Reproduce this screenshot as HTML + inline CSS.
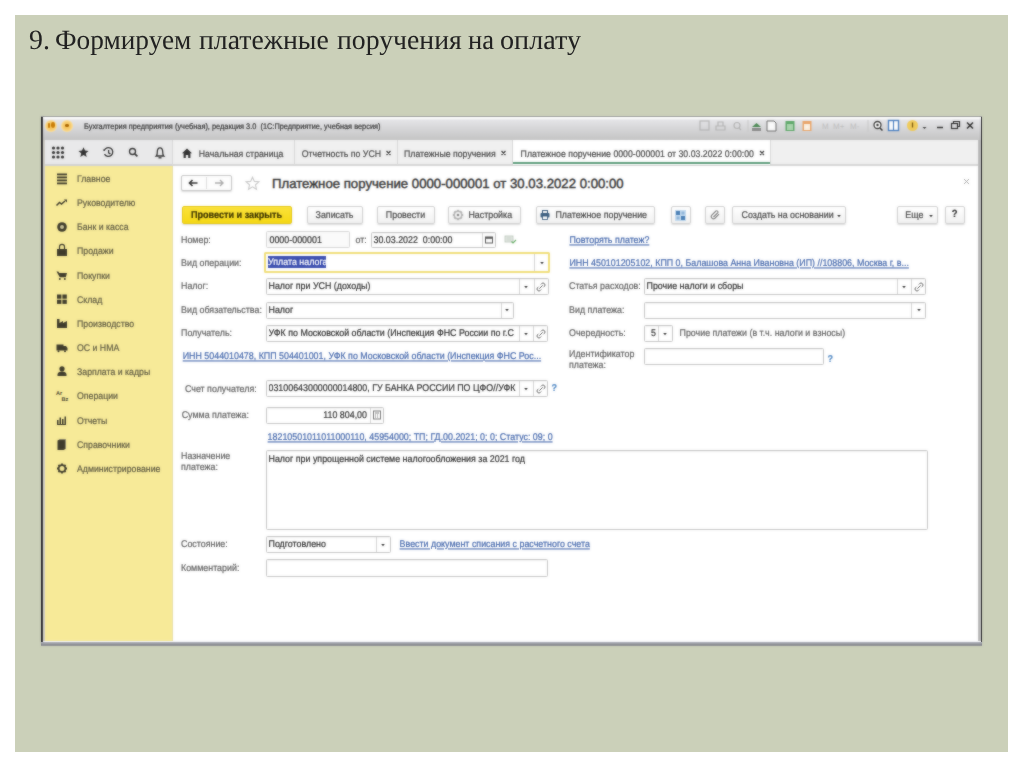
<!DOCTYPE html>
<html><head><meta charset="utf-8">
<style>
*{margin:0;padding:0;box-sizing:border-box}
html,body{width:1024px;height:767px;overflow:hidden;background:#fff}
body{position:relative;font-family:"Liberation Sans",sans-serif;text-rendering:geometricPrecision}
.a{position:absolute}
.t{position:absolute;white-space:nowrap;font-size:8.9px;line-height:12px;height:12px;color:#4a4a4a;-webkit-text-stroke:0.2px currentColor;transform:scaleY(1.1);transform-origin:0 50%}
.lbl{color:#646464}
.fv{color:#333}
.lnk{color:#4669ad;text-decoration:underline;text-underline-offset:0.6px;margin-top:-0.6px}
.fld{position:absolute;border:1px solid #c6c6c6;background:#fff;border-radius:1.5px;box-shadow:inset 0 1px 1px rgba(0,0,0,.05)}
.btn{position:absolute;border:1px solid #d2d2d2;border-radius:2px;background:linear-gradient(#fff,#f1f1f1);box-shadow:0 1px 1.5px rgba(0,0,0,.15)}
</style></head><body>
<div class="a" style="left:15px;top:15px;width:993px;height:737px;background:#cbd0b9"></div>
<div class="a" style="left:29.3px;top:25.5px;font-family:'Liberation Serif',serif;font-size:28px;line-height:30px;color:#222;white-space:nowrap;transform-origin:0 0;transform:scaleX(0.994)">9.</div>
<div class="a" style="left:55.1px;top:25.5px;font-family:'Liberation Serif',serif;font-size:28px;line-height:30px;color:#222;white-space:nowrap;transform-origin:0 0;transform:scaleX(0.975)">Формируем</div>
<div class="a" style="left:199.4px;top:25.5px;font-family:'Liberation Serif',serif;font-size:28px;line-height:30px;color:#222;white-space:nowrap;transform-origin:0 0;transform:scaleX(0.991)">платежные</div>
<div class="a" style="left:336.9px;top:25.5px;font-family:'Liberation Serif',serif;font-size:28px;line-height:30px;color:#222;white-space:nowrap;transform-origin:0 0;transform:scaleX(0.990)">поручения</div>
<div class="a" style="left:468.2px;top:25.5px;font-family:'Liberation Serif',serif;font-size:28px;line-height:30px;color:#222;white-space:nowrap;transform-origin:0 0;transform:scaleX(0.950)">на</div>
<div class="a" style="left:500.4px;top:25.5px;font-family:'Liberation Serif',serif;font-size:28px;line-height:30px;color:#222;white-space:nowrap;transform-origin:0 0;transform:scaleX(1.006)">оплату</div>
<div style="position:absolute;left:0;top:0;width:1024px;height:767px"><div class="a" style="left:41px;top:117px;width:941px;height:528px;background:#bcbcbc"></div>
<div class="a" style="left:41px;top:117px;width:2px;height:528px;background:#3e3e3e"></div>
<div class="a" style="left:981px;top:117px;width:1px;height:528px;background:#3e3e3e"></div>
<div class="a" style="left:41px;top:116px;width:941px;height:1px;background:#a4a6a0"></div>
<div class="a" style="left:43px;top:117px;width:938px;height:23px;background:linear-gradient(#fbfbfb,#fbfbfb 1.5px,#e4e4e7 3px,#d8d8da 45%,#c4c4c4)"></div>
<div class="a" style="left:43px;top:140px;width:2px;height:502px;background:#d2d0c8"></div>
<div class="a" style="left:45px;top:140px;width:128px;height:26px;background:#e9e9ea;border-bottom:2px solid #d2d2d4"></div>
<div class="a" style="left:173px;top:140px;width:805px;height:26px;background:#f0f0f0;border-bottom:2px solid #d6d6d6"></div>
<div class="a" style="left:45px;top:166px;width:128px;height:475px;background:#f7ea98"></div>
<div class="a" style="left:172px;top:166px;width:1px;height:475px;background:#e8dfa6"></div>
<div class="a" style="left:173px;top:166px;width:805px;height:475px;background:#fff"></div>
<div class="a" style="left:43px;top:641px;width:938px;height:1px;background:#f6f7fa"></div>
<div class="a" style="left:41px;top:642px;width:941px;height:4px;background:linear-gradient(#b4b6c0,#8c8e94 60%,#a4a6a0)"></div>

<div class="a" style="left:45.3px;top:119.5px;width:12px;height:12px;border-radius:50%;background:radial-gradient(circle,#f7c45a 0%,#f8cd70 45%,#fbe2a8 75%,rgba(251,230,180,0.3) 100%)"></div>
<div class="a" style="left:47.6px;top:122.6px;width:2.6px;height:5px;background:#c97d08;border-radius:1px"></div>
<div class="a" style="left:50.6px;top:122.3px;width:4.4px;height:5.4px;border-radius:50%;background:#c97d08"></div>
<div class="a" style="left:61.3px;top:119.5px;width:12px;height:12px;border-radius:50%;background:radial-gradient(circle,#f7c45a 0%,#f8cd70 45%,#fbe2a8 75%,rgba(251,230,180,0.3) 100%)"></div>
<div class="a" style="left:65.3px;top:124.2px;width:4px;height:2.6px;border-radius:50%;background:#a86400"></div>
<div class="t" id="wtitle" style="left:84px;top:121px;font-size:7.4px;line-height:12px;color:#3a3a3a">Бухгалтерия предприятия (учебная), редакция 3.0&nbsp; (1С:Предприятие, учебная версия)</div>
<svg class="a" style="left:690px;top:117px" width="292" height="23" viewBox="690 117 292 23">
 <g fill="none" stroke="#b4b4b4" stroke-width="1.2">
  <rect x="700" y="121" width="9" height="9"/>
  <path d="M716 126h9v4h-9zM718 126v-4h5v4"/>
  <circle cx="737" cy="125.5" r="3"/><path d="M739 128l2 2"/>
 </g>
 <path d="M748 120v12" stroke="#c8c8c8"/>
 <g>
  <path d="M752 127l4.5-4 4.5 4z" fill="#4d8a55"/><rect x="752" y="128" width="9" height="3" fill="#8a8a8a"/>
  <path d="M767 121h7l2 2v8h-9z" fill="#fafafa" stroke="#6a6a6a" stroke-width="1"/>
  <rect x="785.5" y="121" width="9" height="10" fill="#5fa86a"/><rect x="787" y="124" width="6" height="6" fill="#a9d3ad"/>
  <rect x="802.5" y="121" width="9" height="10" fill="#e9a56a"/><rect x="804" y="124" width="6" height="6" fill="#fbf0e2"/>
 </g>
 <g fill="#bdbdbd" font-family="Liberation Sans" font-size="8">
  <text x="822" y="129">M</text><text x="833" y="129">M+</text><text x="850" y="129">M-</text>
 </g>
 <path d="M868 120v12" stroke="#c8c8c8"/>
 <circle cx="877.5" cy="125" r="3.5" fill="#fff" stroke="#3a3a3a" stroke-width="1.3"/><circle cx="877.5" cy="125" r="1.2" fill="#333"/><path d="M880 128l2.5 2.5" stroke="#333" stroke-width="1.5"/>
 <rect x="888.5" y="120.5" width="10" height="10" fill="#fff" stroke="#4a7fc0" stroke-width="1.4"/><path d="M893.5 121v9" stroke="#4a7fc0" stroke-width="1.2"/>
 <circle cx="912.5" cy="125.5" r="5.5" fill="#f2c94c" opacity=".9"/><path d="M912.5 122.5v5" stroke="#7a5a10" stroke-width="1.3"/>
 <path d="M922.5 127h4l-2 2z" fill="#444"/>
 <path d="M937 127.5h6" stroke="#333" stroke-width="1.5"/>
 <rect x="951.5" y="123.5" width="6" height="5" fill="none" stroke="#333" stroke-width="1.2"/><path d="M953.5 123.5v-2h6v5h-2" fill="none" stroke="#333" stroke-width="1.2"/>
 <path d="M967 122.5l6 6M973 122.5l-6 6" stroke="#333" stroke-width="1.6"/>
</svg>
<svg class="a" style="left:44px;top:140px" width="128" height="25" viewBox="44 140 128 25">
 <g fill="#333">
  <circle cx="53.5" cy="148" r="1.6"/><circle cx="58" cy="148" r="1.6"/><circle cx="62.5" cy="148" r="1.6"/>
  <circle cx="53.5" cy="152.5" r="1.6"/><circle cx="58" cy="152.5" r="1.6"/><circle cx="62.5" cy="152.5" r="1.6"/>
  <circle cx="53.5" cy="157" r="1.6"/><circle cx="58" cy="157" r="1.6"/><circle cx="62.5" cy="157" r="1.6"/>
  <path d="M83.5 147.2l1.5 3.4 3.6.3-2.8 2.4.9 3.6-3.2-2-3.2 2 .9-3.6-2.8-2.4 3.6-.3z"/>
 </g>
 <g fill="none" stroke="#333" stroke-width="1.3">
  <path d="M104.2 150.5a4.4 4.4 0 1 1 .3 3.6"/><path d="M108.6 150v2.8l1.8 1.2"/>
  <circle cx="132.5" cy="151.5" r="3"/><path d="M134.8 153.8l2.6 2.6" stroke-width="1.7"/>
  <path d="M156.3 156c1-.9 1-2.3 1-4 0-2.6 1.2-4.2 2.7-4.2s2.7 1.6 2.7 4.2c0 1.7 0 3.1 1 4z"/>
 </g>
 <path d="M158.5 157.8h3" stroke="#333" stroke-width="1.3"/>
 <path d="M102.8 149.5l1.2 1.8 1.6-1.6" fill="#333"/>
</svg>
<div class="a" style="left:172px;top:140px;width:1px;height:25px;background:#d8d8d8"></div>
<div class="a" style="left:294px;top:140px;width:1px;height:25px;background:#d8d8d8"></div>
<div class="a" style="left:397px;top:140px;width:1px;height:25px;background:#d8d8d8"></div>
<div class="a" style="left:512px;top:140px;width:259px;height:25px;background:#fff;border-left:1px solid #d8d8d8;border-right:1px solid #d8d8d8"></div>
<div class="a" style="left:513px;top:162px;width:257px;height:2px;background:#5d9d7b"></div>
<svg class="a" style="left:181px;top:147px" width="12" height="12" viewBox="0 0 12 12"><path d="M1 6.2L6 1.5l5 4.7h-1.6V11H7.2V8H4.8v3H2.6V6.2z" fill="#333"/></svg>
<div class="t tab" id="tab1" style="left:198.8px;top:147.7px;font-size:8.75px;color:#4a4a4a">Начальная страница</div>
<div class="t tab" id="tab2" style="left:301.8px;top:147.7px;font-size:8.75px;color:#4a4a4a">Отчетность по УСН</div>
<div class="t tab" id="tab3" style="left:404px;top:147.7px;font-size:8.75px;color:#4a4a4a">Платежные поручения</div>
<div class="t tab" id="tab4" style="left:520.6px;top:147.7px;font-size:8.75px;color:#4a4a4a">Платежное поручение 0000-000001 от 30.03.2022 0:00:00</div>
<svg class="a" style="left:380px;top:147px" width="400" height="12" viewBox="380 147 400 12">
 <path d="M386.5 151l4 4M390.5 151l-4 4M501.5 151l4 4M505.5 151l-4 4M760 151l4 4M764 151l-4 4" stroke="#444" stroke-width="1.3"/>
</svg>
<div class="t sb" style="left:77px;top:173.1px;font-size:8.75px;color:#615d44">Главное</div>
<div class="t sb" style="left:77px;top:197.2px;font-size:8.75px;color:#615d44">Руководителю</div>
<div class="t sb" style="left:77px;top:221.4px;font-size:8.75px;color:#615d44">Банк и касса</div>
<div class="t sb" style="left:77px;top:245.4px;font-size:8.75px;color:#615d44">Продажи</div>
<div class="t sb" style="left:77px;top:269.6px;font-size:8.75px;color:#615d44">Покупки</div>
<div class="t sb" style="left:77px;top:293.8px;font-size:8.75px;color:#615d44">Склад</div>
<div class="t sb" style="left:77px;top:317.9px;font-size:8.75px;color:#615d44">Производство</div>
<div class="t sb" style="left:77px;top:342.1px;font-size:8.75px;color:#615d44">ОС и НМА</div>
<div class="t sb" style="left:77px;top:366.3px;font-size:8.75px;color:#615d44">Зарплата и кадры</div>
<div class="t sb" style="left:77px;top:390.4px;font-size:8.75px;color:#615d44">Операции</div>
<div class="t sb" style="left:77px;top:414.6px;font-size:8.75px;color:#615d44">Отчеты</div>
<div class="t sb" style="left:77px;top:438.8px;font-size:8.75px;color:#615d44">Справочники</div>
<div class="t sb" style="left:77px;top:462.9px;font-size:8.75px;color:#615d44">Администрирование</div>
<svg class="a" style="left:44px;top:165px" width="128" height="320" viewBox="44 165 128 320">
 <g fill="#3f3c2c">
  <rect x="57" y="173.5" width="10" height="1.8"/><rect x="57" y="176.5" width="10" height="1.8"/><rect x="57" y="179.5" width="10" height="1.8"/><rect x="57" y="182.5" width="10" height="1.8"/>
 </g>
 <path d="M56.5 205.5l3-3 2 1.5 3.5-3" fill="none" stroke="#3f3c2c" stroke-width="1.5"/><path d="M64 199.5h3v3z" fill="#3f3c2c"/>
 <circle cx="62" cy="227" r="4.8" fill="#3f3c2c"/><circle cx="62" cy="227" r="2" fill="#c9c39a"/>
 <path d="M57 249h10v7h-10z" fill="#3f3c2c"/><path d="M59.5 249v-2.2a2.5 2.5 0 0 1 5 0V249" fill="none" stroke="#3f3c2c" stroke-width="1.2"/>
 <path d="M56.5 271.5h1.8l1 1.5h7.7l-1.2 4.3h-6z" fill="#3f3c2c"/><circle cx="59.8" cy="279" r="1" fill="#3f3c2c"/><circle cx="64.8" cy="279" r="1" fill="#3f3c2c"/>
 <g fill="#3f3c2c"><rect x="57" y="294.5" width="4.4" height="4.2"/><rect x="62.4" y="294.5" width="4.4" height="4.2"/><rect x="57" y="299.7" width="4.4" height="4.2"/><rect x="62.4" y="299.7" width="4.4" height="4.2"/></g>
 <path d="M57 328v-9h2.5v4l3.5-2v2l4-2v7z" fill="#3f3c2c"/>
 <path d="M56.5 344.5h7v6h-7zM63.5 346h2.5l1.5 2v2.5h-4z" fill="#3f3c2c"/><circle cx="58.5" cy="351.2" r="1" fill="#3f3c2c"/><circle cx="65" cy="351.2" r="1" fill="#3f3c2c"/>
 <circle cx="62" cy="368.8" r="2.6" fill="#3f3c2c"/><path d="M57.5 376v-1.5c0-2 2-3 4.5-3s4.5 1 4.5 3v1.5z" fill="#3f3c2c"/>
 <g font-family="Liberation Sans" font-size="5.5" font-weight="bold" fill="#3f3c2c"><text x="56" y="395">Ar</text><text x="61.5" y="400.5">Bz</text></g>
 <g fill="#3f3c2c"><rect x="57" y="420" width="1.5" height="4"/><rect x="59.5" y="417.5" width="1.5" height="6.5"/><rect x="62" y="419" width="1.5" height="5"/><rect x="57" y="424" width="9" height="1"/><rect x="64.5" y="416.5" width="1.5" height="7.5"/></g>
 <path d="M57.5 440.5l2-1h6v9.5l-2 1h-6z" fill="#3f3c2c"/><path d="M59.5 439.5h6v9.5" fill="none" stroke="#8a8570" stroke-width=".8"/>
 <g transform="translate(62 468.5)"><circle r="3.4" fill="none" stroke="#3f3c2c" stroke-width="1.8"/>
  <path d="M-0.9-5h1.8v2h-1.8zM-0.9 3h1.8v2h-1.8zM-5-0.9v1.8h2v-1.8zM3-0.9v1.8h2v-1.8z" fill="#3f3c2c"/>
  <path d="M-0.9-5h1.8v2h-1.8zM-0.9 3h1.8v2h-1.8zM-5-0.9v1.8h2v-1.8zM3-0.9v1.8h2v-1.8z" fill="#3f3c2c" transform="rotate(45)"/>
 </g>
</svg>
<div class="btn" style="left:181px;top:174.5px;width:50.5px;height:16.5px;background:#fdfdfd;border-color:#c8c8c8"></div>
<div class="a" style="left:206px;top:177px;width:1px;height:12.0px;background:#dedede"></div>
<svg class="a" style="left:185px;top:177px" width="45" height="12" viewBox="185 177 45 12"><path d="M189.5 183h8M192.5 180l-3 3 3 3" fill="none" stroke="#333" stroke-width="1.6"/><path d="M215 183h8M220 180l3 3-3 3" fill="none" stroke="#aaa" stroke-width="1.4"/></svg>
<svg class="a" style="left:245px;top:176px" width="15" height="15" viewBox="0 0 15 15"><path d="M7.5 1.2l1.9 4.2 4.5.4-3.4 3 1 4.5-4-2.4-4 2.4 1-4.5-3.4-3 4.5-.4z" fill="none" stroke="#c8c8c8" stroke-width="1.1"/></svg>
<div class="a" id="ftitle" style="left:272px;top:175.6px;font-size:13.2px;line-height:16px;color:#333;white-space:nowrap;-webkit-text-stroke:0.4px #333">Платежное поручение 0000-000001 от 30.03.2022 0:00:00</div>
<svg class="a" style="left:962px;top:177px" width="9" height="9" viewBox="0 0 9 9"><path d="M2 2l5 5M7 2l-5 5" stroke="#aaa" stroke-width="1"/></svg>
<div class="btn" style="left:181.5px;top:206px;width:110.0px;height:18.0px;background:linear-gradient(#fbe23a,#f5d815);border-color:#e6c812;"></div>
<div class="t" style="left:181.5px;width:110.0px;text-align:center;top:209.4px;font-weight:bold;font-size:9.1px;color:#3d3500">Провести и закрыть</div>
<div class="btn" style="left:306.5px;top:206px;width:56.0px;height:18.0px;"></div>
<div class="t" style="left:306.5px;width:56.0px;text-align:center;top:209.4px;color:#4a4a4a">Записать</div>
<div class="btn" style="left:376.5px;top:206px;width:58.0px;height:18.0px;"></div>
<div class="t" style="left:376.5px;width:58.0px;text-align:center;top:209.4px;color:#4a4a4a">Провести</div>
<div class="btn" style="left:448px;top:206px;width:73.0px;height:18.0px;"></div>
<div class="t" style="left:468.4px;top:209.4px;color:#4a4a4a">Настройка</div>
<div class="btn" style="left:535.5px;top:206px;width:119.5px;height:18.0px;"></div>
<div class="t" style="left:555.4px;top:209.4px;color:#4a4a4a">Платежное поручение</div>
<div class="btn" style="left:731.5px;top:206px;width:114.5px;height:18.0px;"></div>
<div class="t" style="left:741.6px;top:209.4px;color:#4a4a4a">Создать на основании</div>
<div class="btn" style="left:896.5px;top:206px;width:41.0px;height:18.0px;"></div>
<div class="t" style="left:905.3px;top:209.4px;color:#4a4a4a">Еще</div>
<div class="btn" style="left:670.5px;top:206px;width:20.0px;height:18.0px;"></div>
<div class="btn" style="left:705px;top:206px;width:20.0px;height:18.0px;"></div>
<div class="btn" style="left:944.5px;top:206px;width:20.5px;height:18.0px;"></div>
<div class="t" style="left:944.5px;width:20.5px;text-align:center;top:209.4px;font-weight:bold;font-size:9.5px;color:#333">?</div>
<svg class="a" style="left:837px;top:213.5px" width="4" height="4" viewBox="0 0 4 4"><path d="M0.2 1h3.6L2 3.2z" fill="#333"/></svg>
<svg class="a" style="left:928.7px;top:213.5px" width="4" height="4" viewBox="0 0 4 4"><path d="M0.2 1h3.6L2 3.2z" fill="#333"/></svg>
<svg class="a" style="left:452.3px;top:209px" width="12" height="12" viewBox="-6 -6 12 12"><g fill="#b4b4b4"><rect x="-1.3" y="-5.2" width="2.6" height="10.4"/><rect x="-1.3" y="-5.2" width="2.6" height="10.4" transform="rotate(45)"/><rect x="-1.3" y="-5.2" width="2.6" height="10.4" transform="rotate(90)"/><rect x="-1.3" y="-5.2" width="2.6" height="10.4" transform="rotate(135)"/></g><circle r="4.2" fill="#b4b4b4"/><circle r="3" fill="#f4f4f4"/><circle r="1.3" fill="#8a8a8a"/></svg>
<svg class="a" style="left:539px;top:209px" width="12" height="12" viewBox="0 0 12 12"><path d="M3.5 4V1.5h5V4" fill="none" stroke="#3d5f80" stroke-width="1.1"/><rect x="1.5" y="4" width="9" height="4.5" rx="1" fill="#3d5f80"/><rect x="3.5" y="7" width="5" height="3.5" fill="#fff" stroke="#3d5f80" stroke-width=".9"/></svg>
<svg class="a" style="left:674px;top:208.5px" width="13" height="13" viewBox="0 0 13 13"><rect x="1" y="1" width="11" height="11" fill="#c4dbef"/><path d="M2 2h4v4h-4zM7 7h4v4h-4z" fill="#4a7fb5"/><path d="M7.5 2.5h3v3h-3zM2.5 7.5h3v3h-3z" fill="#8fb5da"/></svg>
<svg class="a" style="left:710px;top:209px" width="11" height="11" viewBox="0 0 11 11"><path d="M3.5 8l4.2-4.2a1.3 1.3 0 0 0-1.8-1.8L1.8 6.1a2.2 2.2 0 0 0 3.1 3.1L9 5.1" fill="none" stroke="#888" stroke-width="1.2"/></svg>
<div class="t lbl" style="left:181px;top:234.1px;">Номер:</div>
<div class="fld" style="left:265.5px;top:231px;width:84.0px;height:16.5px;background:#fafafa;border-color:#d6d6d6;box-shadow:none"></div>
<div class="t fv" style="left:269.5px;top:233.9px;">0000-000001</div>
<div class="t lbl" style="left:355.5px;top:234.1px;">от:</div>
<div class="fld" style="left:370.5px;top:231.5px;width:125.5px;height:16.0px;"></div>
<div class="a" style="left:481.5px;top:232.5px;width:1px;height:14.0px;background:#d4d4d4"></div>
<div class="t fv" style="left:373.5px;top:233.9px;">30.03.2022&nbsp; 0:00:00</div>
<svg class="a" style="left:484px;top:235px" width="10" height="10" viewBox="0 0 10 10"><rect x="1.5" y="2" width="7" height="6" fill="none" stroke="#555" stroke-width="1"/><rect x="1.5" y="2" width="7" height="1.8" fill="#555"/></svg>
<svg class="a" style="left:504px;top:234px" width="13" height="11" viewBox="0 0 13 11"><rect x="1" y="2" width="8" height="6" fill="#e6ebe6" stroke="#b8c4b8" stroke-width=".8"/><path d="M2.5 4h5M2.5 6h5" stroke="#b8c4b8" stroke-width=".7"/><path d="M7.5 7.5l1.5 1.5 3-3" fill="none" stroke="#6ab06a" stroke-width="1.2"/></svg>
<div class="t lbl" style="left:181px;top:257.4px;">Вид операции:</div>
<div class="fld" style="left:264px;top:252px;width:286.0px;height:21.0px;border:2px solid #f0de7a;box-shadow:none"></div>
<div class="a" style="left:533.5px;top:254px;width:1px;height:17.0px;background:#d4d4d4"></div>
<svg class="a" style="left:539.5px;top:260.5px" width="4" height="4" viewBox="0 0 4 4"><path d="M0.2 1h3.6L2 3.2z" fill="#333"/></svg>
<div class="a" style="left:267.7px;top:256.3px;width:58.6px;height:11.7px;background:#3c4fb0"></div>
<div class="t fv" style="left:268px;top:256.4px;color:#fff">Уплата налога</div>
<div class="t lbl" style="left:181px;top:280.4px;">Налог:</div>
<div class="fld" style="left:265.5px;top:278px;width:283.0px;height:17.0px;"></div>
<div class="a" style="left:519px;top:279px;width:1px;height:15.0px;background:#d4d4d4"></div>
<div class="a" style="left:533.5px;top:279px;width:1px;height:15.0px;background:#d4d4d4"></div>
<svg class="a" style="left:524.2px;top:284.5px" width="4" height="4" viewBox="0 0 4 4"><path d="M0.2 1h3.6L2 3.2z" fill="#333"/></svg>
<svg class="a" style="left:536px;top:281.5px" width="10" height="10" viewBox="0 0 10 10"><path d="M3.4 6.6l3.2-3.2M4.8 2.4l.8-.8a1.8 1.8 0 0 1 2.8 2.8l-.8.8M5.2 7.6l-.8.8a1.8 1.8 0 0 1-2.8-2.8l.8-.8" fill="none" stroke="#666" stroke-width="1"/></svg>
<div class="t fv" style="left:268.5px;top:280.4px;">Налог при УСН (доходы)</div>
<div class="t lbl" style="left:181px;top:303.9px;">Вид обязательства:</div>
<div class="fld" style="left:265.5px;top:301.5px;width:248.5px;height:17.0px;"></div>
<div class="a" style="left:500.5px;top:302.5px;width:1px;height:15.0px;background:#d4d4d4"></div>
<svg class="a" style="left:505.2px;top:308px" width="4" height="4" viewBox="0 0 4 4"><path d="M0.2 1h3.6L2 3.2z" fill="#333"/></svg>
<div class="t fv" style="left:268.5px;top:303.9px;">Налог</div>
<div class="t lbl" style="left:181px;top:327.4px;">Получатель:</div>
<div class="fld" style="left:265.5px;top:325px;width:282.0px;height:17.0px;"></div>
<div class="a" style="left:518.5px;top:326px;width:1px;height:15.0px;background:#d4d4d4"></div>
<div class="a" style="left:533px;top:326px;width:1px;height:15.0px;background:#d4d4d4"></div>
<svg class="a" style="left:523.8px;top:331.5px" width="4" height="4" viewBox="0 0 4 4"><path d="M0.2 1h3.6L2 3.2z" fill="#333"/></svg>
<svg class="a" style="left:535.5px;top:328.5px" width="10" height="10" viewBox="0 0 10 10"><path d="M3.4 6.6l3.2-3.2M4.8 2.4l.8-.8a1.8 1.8 0 0 1 2.8 2.8l-.8.8M5.2 7.6l-.8.8a1.8 1.8 0 0 1-2.8-2.8l.8-.8" fill="none" stroke="#666" stroke-width="1"/></svg>
<div class="a" style="left:268.5px;top:326.5px;width:249px;height:14px;overflow:hidden"><div class="t fv" style="left:0;top:0.5px">УФК по Московской области (Инспекция ФНС России по г.С</div></div>
<div class="t lnk" style="left:182.7px;top:350.9px;">ИНН 5044010478, КПП 504401001, УФК по Московской области (Инспекция ФНС Рос...</div>
<div class="t lbl" style="left:185px;top:382.7px;">Счет получателя:</div>
<div class="fld" style="left:265.5px;top:380px;width:282.0px;height:17.0px;"></div>
<div class="a" style="left:518.5px;top:381px;width:1px;height:15.0px;background:#d4d4d4"></div>
<div class="a" style="left:533px;top:381px;width:1px;height:15.0px;background:#d4d4d4"></div>
<svg class="a" style="left:523.8px;top:386.5px" width="4" height="4" viewBox="0 0 4 4"><path d="M0.2 1h3.6L2 3.2z" fill="#333"/></svg>
<svg class="a" style="left:535.5px;top:383.5px" width="10" height="10" viewBox="0 0 10 10"><path d="M3.4 6.6l3.2-3.2M4.8 2.4l.8-.8a1.8 1.8 0 0 1 2.8 2.8l-.8.8M5.2 7.6l-.8.8a1.8 1.8 0 0 1-2.8-2.8l.8-.8" fill="none" stroke="#666" stroke-width="1"/></svg>
<div class="a" style="left:268.5px;top:381.5px;width:249px;height:14px;overflow:hidden"><div class="t fv" style="left:0;top:0.5px">03100643000000014800, ГУ БАНКА РОССИИ ПО ЦФО//УФК по</div></div>
<div class="t" style="left:551.5px;top:382.4px;color:#5b8fc7;font-weight:bold;font-size:9px">?</div>
<div class="t lbl" style="left:181.7px;top:409.4px;">Сумма платежа:</div>
<div class="fld" style="left:265.5px;top:407px;width:118.5px;height:16.5px;"></div>
<div class="a" style="left:369.5px;top:408px;width:1px;height:14.5px;background:#d4d4d4"></div>
<div class="t fv" style="left:268px;top:409.4px;width:99px;text-align:right">110 804,00</div>
<svg class="a" style="left:372px;top:410px" width="10" height="10" viewBox="0 0 10 10"><rect x="1.5" y="1" width="7" height="8" fill="none" stroke="#777" stroke-width="1"/><path d="M3 3h4M3 5h1M5 5h1M3 7h1M5 7h1" stroke="#777" stroke-width=".9"/></svg>
<div class="t lnk" style="left:267.6px;top:431.4px;">18210501011011000110, 45954000; ТП; ГД.00.2021; 0; 0; Статус: 09; 0</div>
<div class="t lbl" style="left:181px;top:450.4px;">Назначение</div>
<div class="t lbl" style="left:181px;top:461.1px;">платежа:</div>
<div class="fld" style="left:265.5px;top:450px;width:662.5px;height:79.5px;"></div>
<div class="t fv" style="left:268.5px;top:452.9px;">Налог при упрощенной системе налогообложения за 2021 год</div>
<div class="t lbl" style="left:181px;top:538.4px;">Состояние:</div>
<div class="fld" style="left:265.5px;top:535.5px;width:125.5px;height:17.5px;"></div>
<div class="a" style="left:375.5px;top:536.5px;width:1px;height:15.5px;background:#d4d4d4"></div>
<svg class="a" style="left:381.3px;top:542.5px" width="4" height="4" viewBox="0 0 4 4"><path d="M0.2 1h3.6L2 3.2z" fill="#333"/></svg>
<div class="t fv" style="left:268.5px;top:538.4px;">Подготовлено</div>
<div class="t lnk" style="left:399.6px;top:538.7px;">Ввести документ списания с расчетного счета</div>
<div class="t lbl" style="left:181px;top:561.9px;">Комментарий:</div>
<div class="fld" style="left:265.5px;top:559px;width:282.5px;height:17.5px;"></div>
<div class="t lnk" style="left:569.4px;top:234.1px;">Повторять платеж?</div>
<div class="t lnk" style="left:569.4px;top:257.6px;">ИНН 450101205102, КПП 0, Балашова Анна Ивановна (ИП) //108806, Москва г, в...</div>
<div class="t lbl" style="left:569px;top:280.4px;">Статья расходов:</div>
<div class="fld" style="left:643.5px;top:278px;width:282.5px;height:17.0px;"></div>
<div class="a" style="left:896.5px;top:279px;width:1px;height:15.0px;background:#d4d4d4"></div>
<div class="a" style="left:911px;top:279px;width:1px;height:15.0px;background:#d4d4d4"></div>
<svg class="a" style="left:901.8px;top:284.5px" width="4" height="4" viewBox="0 0 4 4"><path d="M0.2 1h3.6L2 3.2z" fill="#333"/></svg>
<svg class="a" style="left:913.5px;top:281.5px" width="10" height="10" viewBox="0 0 10 10"><path d="M3.4 6.6l3.2-3.2M4.8 2.4l.8-.8a1.8 1.8 0 0 1 2.8 2.8l-.8.8M5.2 7.6l-.8.8a1.8 1.8 0 0 1-2.8-2.8l.8-.8" fill="none" stroke="#666" stroke-width="1"/></svg>
<div class="t fv" style="left:646.5px;top:280.4px;">Прочие налоги и сборы</div>
<div class="t lbl" style="left:569px;top:303.9px;">Вид платежа:</div>
<div class="fld" style="left:643.5px;top:301.5px;width:282.5px;height:17.0px;"></div>
<div class="a" style="left:911px;top:302.5px;width:1px;height:15.0px;background:#d4d4d4"></div>
<svg class="a" style="left:916.5px;top:308px" width="4" height="4" viewBox="0 0 4 4"><path d="M0.2 1h3.6L2 3.2z" fill="#333"/></svg>
<div class="t lbl" style="left:569px;top:327.4px;">Очередность:</div>
<div class="fld" style="left:644px;top:325px;width:29.0px;height:17.0px;"></div>
<div class="a" style="left:657.5px;top:326px;width:1px;height:15.0px;background:#d4d4d4"></div>
<svg class="a" style="left:663.3px;top:331.5px" width="4" height="4" viewBox="0 0 4 4"><path d="M0.2 1h3.6L2 3.2z" fill="#333"/></svg>
<div class="t fv" style="left:651px;top:327.4px;">5</div>
<div class="t lbl" style="left:679.5px;top:327.4px;">Прочие платежи (в т.ч. налоги и взносы)</div>
<div class="t lbl" style="left:569px;top:348.0px;">Идентификатор</div>
<div class="t lbl" style="left:569px;top:358.7px;">платежа:</div>
<div class="fld" style="left:643.5px;top:348px;width:180.0px;height:17.0px;"></div>
<div class="t" style="left:827.5px;top:353.4px;color:#5b8fc7;font-weight:bold;font-size:9px">?</div>
</div><div style="position:absolute;left:0;top:0;width:1024px;height:767px;filter:blur(0.8px);opacity:0.5"><div class="a" style="left:41px;top:117px;width:941px;height:528px;background:#bcbcbc"></div>
<div class="a" style="left:41px;top:117px;width:2px;height:528px;background:#3e3e3e"></div>
<div class="a" style="left:981px;top:117px;width:1px;height:528px;background:#3e3e3e"></div>
<div class="a" style="left:41px;top:116px;width:941px;height:1px;background:#a4a6a0"></div>
<div class="a" style="left:43px;top:117px;width:938px;height:23px;background:linear-gradient(#fbfbfb,#fbfbfb 1.5px,#e4e4e7 3px,#d8d8da 45%,#c4c4c4)"></div>
<div class="a" style="left:43px;top:140px;width:2px;height:502px;background:#d2d0c8"></div>
<div class="a" style="left:45px;top:140px;width:128px;height:26px;background:#e9e9ea;border-bottom:2px solid #d2d2d4"></div>
<div class="a" style="left:173px;top:140px;width:805px;height:26px;background:#f0f0f0;border-bottom:2px solid #d6d6d6"></div>
<div class="a" style="left:45px;top:166px;width:128px;height:475px;background:#f7ea98"></div>
<div class="a" style="left:172px;top:166px;width:1px;height:475px;background:#e8dfa6"></div>
<div class="a" style="left:173px;top:166px;width:805px;height:475px;background:#fff"></div>
<div class="a" style="left:43px;top:641px;width:938px;height:1px;background:#f6f7fa"></div>
<div class="a" style="left:41px;top:642px;width:941px;height:4px;background:linear-gradient(#b4b6c0,#8c8e94 60%,#a4a6a0)"></div>

<div class="a" style="left:45.3px;top:119.5px;width:12px;height:12px;border-radius:50%;background:radial-gradient(circle,#f7c45a 0%,#f8cd70 45%,#fbe2a8 75%,rgba(251,230,180,0.3) 100%)"></div>
<div class="a" style="left:47.6px;top:122.6px;width:2.6px;height:5px;background:#c97d08;border-radius:1px"></div>
<div class="a" style="left:50.6px;top:122.3px;width:4.4px;height:5.4px;border-radius:50%;background:#c97d08"></div>
<div class="a" style="left:61.3px;top:119.5px;width:12px;height:12px;border-radius:50%;background:radial-gradient(circle,#f7c45a 0%,#f8cd70 45%,#fbe2a8 75%,rgba(251,230,180,0.3) 100%)"></div>
<div class="a" style="left:65.3px;top:124.2px;width:4px;height:2.6px;border-radius:50%;background:#a86400"></div>
<div class="t" id="wtitle" style="left:84px;top:121px;font-size:7.4px;line-height:12px;color:#3a3a3a">Бухгалтерия предприятия (учебная), редакция 3.0&nbsp; (1С:Предприятие, учебная версия)</div>
<svg class="a" style="left:690px;top:117px" width="292" height="23" viewBox="690 117 292 23">
 <g fill="none" stroke="#b4b4b4" stroke-width="1.2">
  <rect x="700" y="121" width="9" height="9"/>
  <path d="M716 126h9v4h-9zM718 126v-4h5v4"/>
  <circle cx="737" cy="125.5" r="3"/><path d="M739 128l2 2"/>
 </g>
 <path d="M748 120v12" stroke="#c8c8c8"/>
 <g>
  <path d="M752 127l4.5-4 4.5 4z" fill="#4d8a55"/><rect x="752" y="128" width="9" height="3" fill="#8a8a8a"/>
  <path d="M767 121h7l2 2v8h-9z" fill="#fafafa" stroke="#6a6a6a" stroke-width="1"/>
  <rect x="785.5" y="121" width="9" height="10" fill="#5fa86a"/><rect x="787" y="124" width="6" height="6" fill="#a9d3ad"/>
  <rect x="802.5" y="121" width="9" height="10" fill="#e9a56a"/><rect x="804" y="124" width="6" height="6" fill="#fbf0e2"/>
 </g>
 <g fill="#bdbdbd" font-family="Liberation Sans" font-size="8">
  <text x="822" y="129">M</text><text x="833" y="129">M+</text><text x="850" y="129">M-</text>
 </g>
 <path d="M868 120v12" stroke="#c8c8c8"/>
 <circle cx="877.5" cy="125" r="3.5" fill="#fff" stroke="#3a3a3a" stroke-width="1.3"/><circle cx="877.5" cy="125" r="1.2" fill="#333"/><path d="M880 128l2.5 2.5" stroke="#333" stroke-width="1.5"/>
 <rect x="888.5" y="120.5" width="10" height="10" fill="#fff" stroke="#4a7fc0" stroke-width="1.4"/><path d="M893.5 121v9" stroke="#4a7fc0" stroke-width="1.2"/>
 <circle cx="912.5" cy="125.5" r="5.5" fill="#f2c94c" opacity=".9"/><path d="M912.5 122.5v5" stroke="#7a5a10" stroke-width="1.3"/>
 <path d="M922.5 127h4l-2 2z" fill="#444"/>
 <path d="M937 127.5h6" stroke="#333" stroke-width="1.5"/>
 <rect x="951.5" y="123.5" width="6" height="5" fill="none" stroke="#333" stroke-width="1.2"/><path d="M953.5 123.5v-2h6v5h-2" fill="none" stroke="#333" stroke-width="1.2"/>
 <path d="M967 122.5l6 6M973 122.5l-6 6" stroke="#333" stroke-width="1.6"/>
</svg>
<svg class="a" style="left:44px;top:140px" width="128" height="25" viewBox="44 140 128 25">
 <g fill="#333">
  <circle cx="53.5" cy="148" r="1.6"/><circle cx="58" cy="148" r="1.6"/><circle cx="62.5" cy="148" r="1.6"/>
  <circle cx="53.5" cy="152.5" r="1.6"/><circle cx="58" cy="152.5" r="1.6"/><circle cx="62.5" cy="152.5" r="1.6"/>
  <circle cx="53.5" cy="157" r="1.6"/><circle cx="58" cy="157" r="1.6"/><circle cx="62.5" cy="157" r="1.6"/>
  <path d="M83.5 147.2l1.5 3.4 3.6.3-2.8 2.4.9 3.6-3.2-2-3.2 2 .9-3.6-2.8-2.4 3.6-.3z"/>
 </g>
 <g fill="none" stroke="#333" stroke-width="1.3">
  <path d="M104.2 150.5a4.4 4.4 0 1 1 .3 3.6"/><path d="M108.6 150v2.8l1.8 1.2"/>
  <circle cx="132.5" cy="151.5" r="3"/><path d="M134.8 153.8l2.6 2.6" stroke-width="1.7"/>
  <path d="M156.3 156c1-.9 1-2.3 1-4 0-2.6 1.2-4.2 2.7-4.2s2.7 1.6 2.7 4.2c0 1.7 0 3.1 1 4z"/>
 </g>
 <path d="M158.5 157.8h3" stroke="#333" stroke-width="1.3"/>
 <path d="M102.8 149.5l1.2 1.8 1.6-1.6" fill="#333"/>
</svg>
<div class="a" style="left:172px;top:140px;width:1px;height:25px;background:#d8d8d8"></div>
<div class="a" style="left:294px;top:140px;width:1px;height:25px;background:#d8d8d8"></div>
<div class="a" style="left:397px;top:140px;width:1px;height:25px;background:#d8d8d8"></div>
<div class="a" style="left:512px;top:140px;width:259px;height:25px;background:#fff;border-left:1px solid #d8d8d8;border-right:1px solid #d8d8d8"></div>
<div class="a" style="left:513px;top:162px;width:257px;height:2px;background:#5d9d7b"></div>
<svg class="a" style="left:181px;top:147px" width="12" height="12" viewBox="0 0 12 12"><path d="M1 6.2L6 1.5l5 4.7h-1.6V11H7.2V8H4.8v3H2.6V6.2z" fill="#333"/></svg>
<div class="t tab" id="tab1" style="left:198.8px;top:147.7px;font-size:8.75px;color:#4a4a4a">Начальная страница</div>
<div class="t tab" id="tab2" style="left:301.8px;top:147.7px;font-size:8.75px;color:#4a4a4a">Отчетность по УСН</div>
<div class="t tab" id="tab3" style="left:404px;top:147.7px;font-size:8.75px;color:#4a4a4a">Платежные поручения</div>
<div class="t tab" id="tab4" style="left:520.6px;top:147.7px;font-size:8.75px;color:#4a4a4a">Платежное поручение 0000-000001 от 30.03.2022 0:00:00</div>
<svg class="a" style="left:380px;top:147px" width="400" height="12" viewBox="380 147 400 12">
 <path d="M386.5 151l4 4M390.5 151l-4 4M501.5 151l4 4M505.5 151l-4 4M760 151l4 4M764 151l-4 4" stroke="#444" stroke-width="1.3"/>
</svg>
<div class="t sb" style="left:77px;top:173.1px;font-size:8.75px;color:#615d44">Главное</div>
<div class="t sb" style="left:77px;top:197.2px;font-size:8.75px;color:#615d44">Руководителю</div>
<div class="t sb" style="left:77px;top:221.4px;font-size:8.75px;color:#615d44">Банк и касса</div>
<div class="t sb" style="left:77px;top:245.4px;font-size:8.75px;color:#615d44">Продажи</div>
<div class="t sb" style="left:77px;top:269.6px;font-size:8.75px;color:#615d44">Покупки</div>
<div class="t sb" style="left:77px;top:293.8px;font-size:8.75px;color:#615d44">Склад</div>
<div class="t sb" style="left:77px;top:317.9px;font-size:8.75px;color:#615d44">Производство</div>
<div class="t sb" style="left:77px;top:342.1px;font-size:8.75px;color:#615d44">ОС и НМА</div>
<div class="t sb" style="left:77px;top:366.3px;font-size:8.75px;color:#615d44">Зарплата и кадры</div>
<div class="t sb" style="left:77px;top:390.4px;font-size:8.75px;color:#615d44">Операции</div>
<div class="t sb" style="left:77px;top:414.6px;font-size:8.75px;color:#615d44">Отчеты</div>
<div class="t sb" style="left:77px;top:438.8px;font-size:8.75px;color:#615d44">Справочники</div>
<div class="t sb" style="left:77px;top:462.9px;font-size:8.75px;color:#615d44">Администрирование</div>
<svg class="a" style="left:44px;top:165px" width="128" height="320" viewBox="44 165 128 320">
 <g fill="#3f3c2c">
  <rect x="57" y="173.5" width="10" height="1.8"/><rect x="57" y="176.5" width="10" height="1.8"/><rect x="57" y="179.5" width="10" height="1.8"/><rect x="57" y="182.5" width="10" height="1.8"/>
 </g>
 <path d="M56.5 205.5l3-3 2 1.5 3.5-3" fill="none" stroke="#3f3c2c" stroke-width="1.5"/><path d="M64 199.5h3v3z" fill="#3f3c2c"/>
 <circle cx="62" cy="227" r="4.8" fill="#3f3c2c"/><circle cx="62" cy="227" r="2" fill="#c9c39a"/>
 <path d="M57 249h10v7h-10z" fill="#3f3c2c"/><path d="M59.5 249v-2.2a2.5 2.5 0 0 1 5 0V249" fill="none" stroke="#3f3c2c" stroke-width="1.2"/>
 <path d="M56.5 271.5h1.8l1 1.5h7.7l-1.2 4.3h-6z" fill="#3f3c2c"/><circle cx="59.8" cy="279" r="1" fill="#3f3c2c"/><circle cx="64.8" cy="279" r="1" fill="#3f3c2c"/>
 <g fill="#3f3c2c"><rect x="57" y="294.5" width="4.4" height="4.2"/><rect x="62.4" y="294.5" width="4.4" height="4.2"/><rect x="57" y="299.7" width="4.4" height="4.2"/><rect x="62.4" y="299.7" width="4.4" height="4.2"/></g>
 <path d="M57 328v-9h2.5v4l3.5-2v2l4-2v7z" fill="#3f3c2c"/>
 <path d="M56.5 344.5h7v6h-7zM63.5 346h2.5l1.5 2v2.5h-4z" fill="#3f3c2c"/><circle cx="58.5" cy="351.2" r="1" fill="#3f3c2c"/><circle cx="65" cy="351.2" r="1" fill="#3f3c2c"/>
 <circle cx="62" cy="368.8" r="2.6" fill="#3f3c2c"/><path d="M57.5 376v-1.5c0-2 2-3 4.5-3s4.5 1 4.5 3v1.5z" fill="#3f3c2c"/>
 <g font-family="Liberation Sans" font-size="5.5" font-weight="bold" fill="#3f3c2c"><text x="56" y="395">Ar</text><text x="61.5" y="400.5">Bz</text></g>
 <g fill="#3f3c2c"><rect x="57" y="420" width="1.5" height="4"/><rect x="59.5" y="417.5" width="1.5" height="6.5"/><rect x="62" y="419" width="1.5" height="5"/><rect x="57" y="424" width="9" height="1"/><rect x="64.5" y="416.5" width="1.5" height="7.5"/></g>
 <path d="M57.5 440.5l2-1h6v9.5l-2 1h-6z" fill="#3f3c2c"/><path d="M59.5 439.5h6v9.5" fill="none" stroke="#8a8570" stroke-width=".8"/>
 <g transform="translate(62 468.5)"><circle r="3.4" fill="none" stroke="#3f3c2c" stroke-width="1.8"/>
  <path d="M-0.9-5h1.8v2h-1.8zM-0.9 3h1.8v2h-1.8zM-5-0.9v1.8h2v-1.8zM3-0.9v1.8h2v-1.8z" fill="#3f3c2c"/>
  <path d="M-0.9-5h1.8v2h-1.8zM-0.9 3h1.8v2h-1.8zM-5-0.9v1.8h2v-1.8zM3-0.9v1.8h2v-1.8z" fill="#3f3c2c" transform="rotate(45)"/>
 </g>
</svg>
<div class="btn" style="left:181px;top:174.5px;width:50.5px;height:16.5px;background:#fdfdfd;border-color:#c8c8c8"></div>
<div class="a" style="left:206px;top:177px;width:1px;height:12.0px;background:#dedede"></div>
<svg class="a" style="left:185px;top:177px" width="45" height="12" viewBox="185 177 45 12"><path d="M189.5 183h8M192.5 180l-3 3 3 3" fill="none" stroke="#333" stroke-width="1.6"/><path d="M215 183h8M220 180l3 3-3 3" fill="none" stroke="#aaa" stroke-width="1.4"/></svg>
<svg class="a" style="left:245px;top:176px" width="15" height="15" viewBox="0 0 15 15"><path d="M7.5 1.2l1.9 4.2 4.5.4-3.4 3 1 4.5-4-2.4-4 2.4 1-4.5-3.4-3 4.5-.4z" fill="none" stroke="#c8c8c8" stroke-width="1.1"/></svg>
<div class="a" id="ftitle" style="left:272px;top:175.6px;font-size:13.2px;line-height:16px;color:#333;white-space:nowrap;-webkit-text-stroke:0.4px #333">Платежное поручение 0000-000001 от 30.03.2022 0:00:00</div>
<svg class="a" style="left:962px;top:177px" width="9" height="9" viewBox="0 0 9 9"><path d="M2 2l5 5M7 2l-5 5" stroke="#aaa" stroke-width="1"/></svg>
<div class="btn" style="left:181.5px;top:206px;width:110.0px;height:18.0px;background:linear-gradient(#fbe23a,#f5d815);border-color:#e6c812;"></div>
<div class="t" style="left:181.5px;width:110.0px;text-align:center;top:209.4px;font-weight:bold;font-size:9.1px;color:#3d3500">Провести и закрыть</div>
<div class="btn" style="left:306.5px;top:206px;width:56.0px;height:18.0px;"></div>
<div class="t" style="left:306.5px;width:56.0px;text-align:center;top:209.4px;color:#4a4a4a">Записать</div>
<div class="btn" style="left:376.5px;top:206px;width:58.0px;height:18.0px;"></div>
<div class="t" style="left:376.5px;width:58.0px;text-align:center;top:209.4px;color:#4a4a4a">Провести</div>
<div class="btn" style="left:448px;top:206px;width:73.0px;height:18.0px;"></div>
<div class="t" style="left:468.4px;top:209.4px;color:#4a4a4a">Настройка</div>
<div class="btn" style="left:535.5px;top:206px;width:119.5px;height:18.0px;"></div>
<div class="t" style="left:555.4px;top:209.4px;color:#4a4a4a">Платежное поручение</div>
<div class="btn" style="left:731.5px;top:206px;width:114.5px;height:18.0px;"></div>
<div class="t" style="left:741.6px;top:209.4px;color:#4a4a4a">Создать на основании</div>
<div class="btn" style="left:896.5px;top:206px;width:41.0px;height:18.0px;"></div>
<div class="t" style="left:905.3px;top:209.4px;color:#4a4a4a">Еще</div>
<div class="btn" style="left:670.5px;top:206px;width:20.0px;height:18.0px;"></div>
<div class="btn" style="left:705px;top:206px;width:20.0px;height:18.0px;"></div>
<div class="btn" style="left:944.5px;top:206px;width:20.5px;height:18.0px;"></div>
<div class="t" style="left:944.5px;width:20.5px;text-align:center;top:209.4px;font-weight:bold;font-size:9.5px;color:#333">?</div>
<svg class="a" style="left:837px;top:213.5px" width="4" height="4" viewBox="0 0 4 4"><path d="M0.2 1h3.6L2 3.2z" fill="#333"/></svg>
<svg class="a" style="left:928.7px;top:213.5px" width="4" height="4" viewBox="0 0 4 4"><path d="M0.2 1h3.6L2 3.2z" fill="#333"/></svg>
<svg class="a" style="left:452.3px;top:209px" width="12" height="12" viewBox="-6 -6 12 12"><g fill="#b4b4b4"><rect x="-1.3" y="-5.2" width="2.6" height="10.4"/><rect x="-1.3" y="-5.2" width="2.6" height="10.4" transform="rotate(45)"/><rect x="-1.3" y="-5.2" width="2.6" height="10.4" transform="rotate(90)"/><rect x="-1.3" y="-5.2" width="2.6" height="10.4" transform="rotate(135)"/></g><circle r="4.2" fill="#b4b4b4"/><circle r="3" fill="#f4f4f4"/><circle r="1.3" fill="#8a8a8a"/></svg>
<svg class="a" style="left:539px;top:209px" width="12" height="12" viewBox="0 0 12 12"><path d="M3.5 4V1.5h5V4" fill="none" stroke="#3d5f80" stroke-width="1.1"/><rect x="1.5" y="4" width="9" height="4.5" rx="1" fill="#3d5f80"/><rect x="3.5" y="7" width="5" height="3.5" fill="#fff" stroke="#3d5f80" stroke-width=".9"/></svg>
<svg class="a" style="left:674px;top:208.5px" width="13" height="13" viewBox="0 0 13 13"><rect x="1" y="1" width="11" height="11" fill="#c4dbef"/><path d="M2 2h4v4h-4zM7 7h4v4h-4z" fill="#4a7fb5"/><path d="M7.5 2.5h3v3h-3zM2.5 7.5h3v3h-3z" fill="#8fb5da"/></svg>
<svg class="a" style="left:710px;top:209px" width="11" height="11" viewBox="0 0 11 11"><path d="M3.5 8l4.2-4.2a1.3 1.3 0 0 0-1.8-1.8L1.8 6.1a2.2 2.2 0 0 0 3.1 3.1L9 5.1" fill="none" stroke="#888" stroke-width="1.2"/></svg>
<div class="t lbl" style="left:181px;top:234.1px;">Номер:</div>
<div class="fld" style="left:265.5px;top:231px;width:84.0px;height:16.5px;background:#fafafa;border-color:#d6d6d6;box-shadow:none"></div>
<div class="t fv" style="left:269.5px;top:233.9px;">0000-000001</div>
<div class="t lbl" style="left:355.5px;top:234.1px;">от:</div>
<div class="fld" style="left:370.5px;top:231.5px;width:125.5px;height:16.0px;"></div>
<div class="a" style="left:481.5px;top:232.5px;width:1px;height:14.0px;background:#d4d4d4"></div>
<div class="t fv" style="left:373.5px;top:233.9px;">30.03.2022&nbsp; 0:00:00</div>
<svg class="a" style="left:484px;top:235px" width="10" height="10" viewBox="0 0 10 10"><rect x="1.5" y="2" width="7" height="6" fill="none" stroke="#555" stroke-width="1"/><rect x="1.5" y="2" width="7" height="1.8" fill="#555"/></svg>
<svg class="a" style="left:504px;top:234px" width="13" height="11" viewBox="0 0 13 11"><rect x="1" y="2" width="8" height="6" fill="#e6ebe6" stroke="#b8c4b8" stroke-width=".8"/><path d="M2.5 4h5M2.5 6h5" stroke="#b8c4b8" stroke-width=".7"/><path d="M7.5 7.5l1.5 1.5 3-3" fill="none" stroke="#6ab06a" stroke-width="1.2"/></svg>
<div class="t lbl" style="left:181px;top:257.4px;">Вид операции:</div>
<div class="fld" style="left:264px;top:252px;width:286.0px;height:21.0px;border:2px solid #f0de7a;box-shadow:none"></div>
<div class="a" style="left:533.5px;top:254px;width:1px;height:17.0px;background:#d4d4d4"></div>
<svg class="a" style="left:539.5px;top:260.5px" width="4" height="4" viewBox="0 0 4 4"><path d="M0.2 1h3.6L2 3.2z" fill="#333"/></svg>
<div class="a" style="left:267.7px;top:256.3px;width:58.6px;height:11.7px;background:#3c4fb0"></div>
<div class="t fv" style="left:268px;top:256.4px;color:#fff">Уплата налога</div>
<div class="t lbl" style="left:181px;top:280.4px;">Налог:</div>
<div class="fld" style="left:265.5px;top:278px;width:283.0px;height:17.0px;"></div>
<div class="a" style="left:519px;top:279px;width:1px;height:15.0px;background:#d4d4d4"></div>
<div class="a" style="left:533.5px;top:279px;width:1px;height:15.0px;background:#d4d4d4"></div>
<svg class="a" style="left:524.2px;top:284.5px" width="4" height="4" viewBox="0 0 4 4"><path d="M0.2 1h3.6L2 3.2z" fill="#333"/></svg>
<svg class="a" style="left:536px;top:281.5px" width="10" height="10" viewBox="0 0 10 10"><path d="M3.4 6.6l3.2-3.2M4.8 2.4l.8-.8a1.8 1.8 0 0 1 2.8 2.8l-.8.8M5.2 7.6l-.8.8a1.8 1.8 0 0 1-2.8-2.8l.8-.8" fill="none" stroke="#666" stroke-width="1"/></svg>
<div class="t fv" style="left:268.5px;top:280.4px;">Налог при УСН (доходы)</div>
<div class="t lbl" style="left:181px;top:303.9px;">Вид обязательства:</div>
<div class="fld" style="left:265.5px;top:301.5px;width:248.5px;height:17.0px;"></div>
<div class="a" style="left:500.5px;top:302.5px;width:1px;height:15.0px;background:#d4d4d4"></div>
<svg class="a" style="left:505.2px;top:308px" width="4" height="4" viewBox="0 0 4 4"><path d="M0.2 1h3.6L2 3.2z" fill="#333"/></svg>
<div class="t fv" style="left:268.5px;top:303.9px;">Налог</div>
<div class="t lbl" style="left:181px;top:327.4px;">Получатель:</div>
<div class="fld" style="left:265.5px;top:325px;width:282.0px;height:17.0px;"></div>
<div class="a" style="left:518.5px;top:326px;width:1px;height:15.0px;background:#d4d4d4"></div>
<div class="a" style="left:533px;top:326px;width:1px;height:15.0px;background:#d4d4d4"></div>
<svg class="a" style="left:523.8px;top:331.5px" width="4" height="4" viewBox="0 0 4 4"><path d="M0.2 1h3.6L2 3.2z" fill="#333"/></svg>
<svg class="a" style="left:535.5px;top:328.5px" width="10" height="10" viewBox="0 0 10 10"><path d="M3.4 6.6l3.2-3.2M4.8 2.4l.8-.8a1.8 1.8 0 0 1 2.8 2.8l-.8.8M5.2 7.6l-.8.8a1.8 1.8 0 0 1-2.8-2.8l.8-.8" fill="none" stroke="#666" stroke-width="1"/></svg>
<div class="a" style="left:268.5px;top:326.5px;width:249px;height:14px;overflow:hidden"><div class="t fv" style="left:0;top:0.5px">УФК по Московской области (Инспекция ФНС России по г.С</div></div>
<div class="t lnk" style="left:182.7px;top:350.9px;">ИНН 5044010478, КПП 504401001, УФК по Московской области (Инспекция ФНС Рос...</div>
<div class="t lbl" style="left:185px;top:382.7px;">Счет получателя:</div>
<div class="fld" style="left:265.5px;top:380px;width:282.0px;height:17.0px;"></div>
<div class="a" style="left:518.5px;top:381px;width:1px;height:15.0px;background:#d4d4d4"></div>
<div class="a" style="left:533px;top:381px;width:1px;height:15.0px;background:#d4d4d4"></div>
<svg class="a" style="left:523.8px;top:386.5px" width="4" height="4" viewBox="0 0 4 4"><path d="M0.2 1h3.6L2 3.2z" fill="#333"/></svg>
<svg class="a" style="left:535.5px;top:383.5px" width="10" height="10" viewBox="0 0 10 10"><path d="M3.4 6.6l3.2-3.2M4.8 2.4l.8-.8a1.8 1.8 0 0 1 2.8 2.8l-.8.8M5.2 7.6l-.8.8a1.8 1.8 0 0 1-2.8-2.8l.8-.8" fill="none" stroke="#666" stroke-width="1"/></svg>
<div class="a" style="left:268.5px;top:381.5px;width:249px;height:14px;overflow:hidden"><div class="t fv" style="left:0;top:0.5px">03100643000000014800, ГУ БАНКА РОССИИ ПО ЦФО//УФК по</div></div>
<div class="t" style="left:551.5px;top:382.4px;color:#5b8fc7;font-weight:bold;font-size:9px">?</div>
<div class="t lbl" style="left:181.7px;top:409.4px;">Сумма платежа:</div>
<div class="fld" style="left:265.5px;top:407px;width:118.5px;height:16.5px;"></div>
<div class="a" style="left:369.5px;top:408px;width:1px;height:14.5px;background:#d4d4d4"></div>
<div class="t fv" style="left:268px;top:409.4px;width:99px;text-align:right">110 804,00</div>
<svg class="a" style="left:372px;top:410px" width="10" height="10" viewBox="0 0 10 10"><rect x="1.5" y="1" width="7" height="8" fill="none" stroke="#777" stroke-width="1"/><path d="M3 3h4M3 5h1M5 5h1M3 7h1M5 7h1" stroke="#777" stroke-width=".9"/></svg>
<div class="t lnk" style="left:267.6px;top:431.4px;">18210501011011000110, 45954000; ТП; ГД.00.2021; 0; 0; Статус: 09; 0</div>
<div class="t lbl" style="left:181px;top:450.4px;">Назначение</div>
<div class="t lbl" style="left:181px;top:461.1px;">платежа:</div>
<div class="fld" style="left:265.5px;top:450px;width:662.5px;height:79.5px;"></div>
<div class="t fv" style="left:268.5px;top:452.9px;">Налог при упрощенной системе налогообложения за 2021 год</div>
<div class="t lbl" style="left:181px;top:538.4px;">Состояние:</div>
<div class="fld" style="left:265.5px;top:535.5px;width:125.5px;height:17.5px;"></div>
<div class="a" style="left:375.5px;top:536.5px;width:1px;height:15.5px;background:#d4d4d4"></div>
<svg class="a" style="left:381.3px;top:542.5px" width="4" height="4" viewBox="0 0 4 4"><path d="M0.2 1h3.6L2 3.2z" fill="#333"/></svg>
<div class="t fv" style="left:268.5px;top:538.4px;">Подготовлено</div>
<div class="t lnk" style="left:399.6px;top:538.7px;">Ввести документ списания с расчетного счета</div>
<div class="t lbl" style="left:181px;top:561.9px;">Комментарий:</div>
<div class="fld" style="left:265.5px;top:559px;width:282.5px;height:17.5px;"></div>
<div class="t lnk" style="left:569.4px;top:234.1px;">Повторять платеж?</div>
<div class="t lnk" style="left:569.4px;top:257.6px;">ИНН 450101205102, КПП 0, Балашова Анна Ивановна (ИП) //108806, Москва г, в...</div>
<div class="t lbl" style="left:569px;top:280.4px;">Статья расходов:</div>
<div class="fld" style="left:643.5px;top:278px;width:282.5px;height:17.0px;"></div>
<div class="a" style="left:896.5px;top:279px;width:1px;height:15.0px;background:#d4d4d4"></div>
<div class="a" style="left:911px;top:279px;width:1px;height:15.0px;background:#d4d4d4"></div>
<svg class="a" style="left:901.8px;top:284.5px" width="4" height="4" viewBox="0 0 4 4"><path d="M0.2 1h3.6L2 3.2z" fill="#333"/></svg>
<svg class="a" style="left:913.5px;top:281.5px" width="10" height="10" viewBox="0 0 10 10"><path d="M3.4 6.6l3.2-3.2M4.8 2.4l.8-.8a1.8 1.8 0 0 1 2.8 2.8l-.8.8M5.2 7.6l-.8.8a1.8 1.8 0 0 1-2.8-2.8l.8-.8" fill="none" stroke="#666" stroke-width="1"/></svg>
<div class="t fv" style="left:646.5px;top:280.4px;">Прочие налоги и сборы</div>
<div class="t lbl" style="left:569px;top:303.9px;">Вид платежа:</div>
<div class="fld" style="left:643.5px;top:301.5px;width:282.5px;height:17.0px;"></div>
<div class="a" style="left:911px;top:302.5px;width:1px;height:15.0px;background:#d4d4d4"></div>
<svg class="a" style="left:916.5px;top:308px" width="4" height="4" viewBox="0 0 4 4"><path d="M0.2 1h3.6L2 3.2z" fill="#333"/></svg>
<div class="t lbl" style="left:569px;top:327.4px;">Очередность:</div>
<div class="fld" style="left:644px;top:325px;width:29.0px;height:17.0px;"></div>
<div class="a" style="left:657.5px;top:326px;width:1px;height:15.0px;background:#d4d4d4"></div>
<svg class="a" style="left:663.3px;top:331.5px" width="4" height="4" viewBox="0 0 4 4"><path d="M0.2 1h3.6L2 3.2z" fill="#333"/></svg>
<div class="t fv" style="left:651px;top:327.4px;">5</div>
<div class="t lbl" style="left:679.5px;top:327.4px;">Прочие платежи (в т.ч. налоги и взносы)</div>
<div class="t lbl" style="left:569px;top:348.0px;">Идентификатор</div>
<div class="t lbl" style="left:569px;top:358.7px;">платежа:</div>
<div class="fld" style="left:643.5px;top:348px;width:180.0px;height:17.0px;"></div>
<div class="t" style="left:827.5px;top:353.4px;color:#5b8fc7;font-weight:bold;font-size:9px">?</div>
</div></body></html>
